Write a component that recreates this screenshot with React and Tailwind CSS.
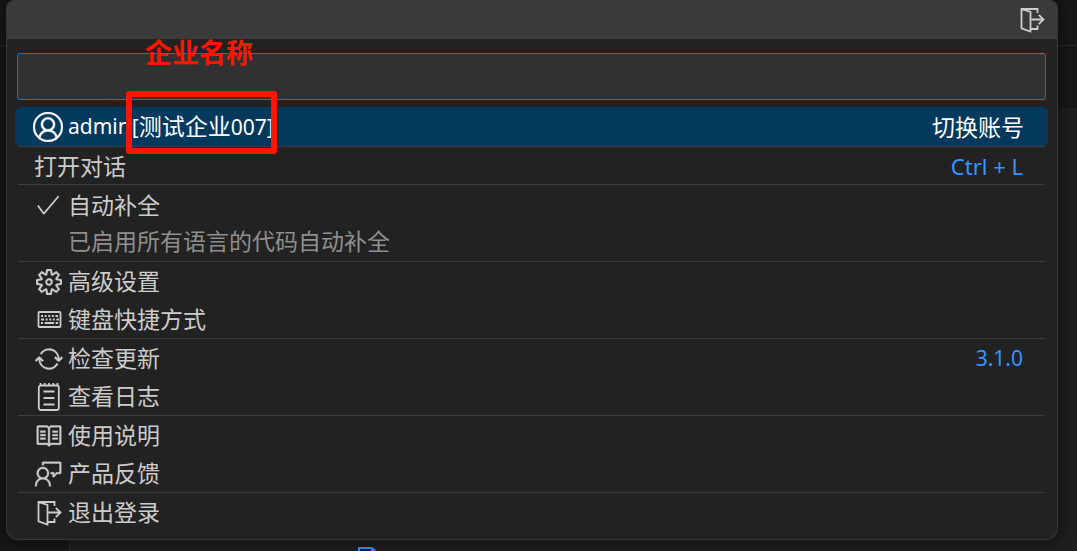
import React from "react";
import { VscAccount, VscCheck, VscSettingsGear, VscSync, VscBook, VscFeedback } from "react-icons/vsc";

function ExitIcon({ className }) {
  return (
    <svg viewBox="0 0 26 26" fill="none" stroke="currentColor" strokeWidth="1.8" className={className} aria-hidden="true">
      <path d="M18.500 6V2H2.500v19.300l9 3.200V5L2.800 2.200M12 22h6.500v-3.500M12.500 12.500h12M19.800 7.800l4.700 4.700-4.700 4.700" />
    </svg>
  );
}

function KeyboardIcon({ className }) {
  return (
    <svg viewBox="0 0 26 26" fill="none" stroke="currentColor" strokeWidth="1.800" className={className} aria-hidden="true">
      <rect x="2.500" y="5" width="22" height="15" rx="1" />
      <path d="M5 9h2m1.600 0h2m1.600 0h2m1.600 0h2m1.600 0h2.600M5 12.500h3m1.600 0h2m1.600 0h2m1.600 0h2m1.600 0h2.600M5 16h2m1.600 0h9.400m1.600 0h2.400" />
    </svg>
  );
}

function LogIcon({ className }) {
  return (
    <svg viewBox="0 0 26 30" fill="none" stroke="currentColor" strokeWidth="1.800" className={className} aria-hidden="true">
      <rect x="2.800" y="3.500" width="20" height="24.500" rx="2" />
      <path d="M4.500 1v3M8.700 1v3M13 1v3M17.300 1v3M21.500 1v3M7.500 9.500h11M7.500 16h11M7.500 22.500h11" />
    </svg>
  );
}

const ICON = "size-[26px]";
const WIDE_ICON = "size-[28px]";

const groups = [
  [{ icon: <VscSettingsGear className={ICON} strokeWidth="0.2" />, label: "高级设置" }, { icon: <KeyboardIcon className={ICON} />, label: "键盘快捷方式" }],
  [{ icon: <VscSync className={WIDE_ICON} strokeWidth="0.2" />, label: "检查更新", extra: "3.1.0" }, { icon: <LogIcon className="h-[30px] w-[26px]" />, label: "查看日志" }],
  [{ icon: <VscBook className={WIDE_ICON} strokeWidth="0.2" />, label: "使用说明" }, { icon: <VscFeedback className={WIDE_ICON} strokeWidth="0.2" />, label: "产品反馈" }],
  [{ icon: <ExitIcon className={ICON} />, label: "退出登录" }],
];

function Item({ icon, label, extra }) {
  return (
    <button type="button" className="flex h-[38px] w-full items-center px-4 text-left">
      {icon && (
        <span className="flex w-[34px] shrink-0 items-center pt-px">
          <span className="flex w-[29px] justify-center">{icon}</span>
        </span>
      )}
      <span>{label}</span>
      {extra && <span className="ml-auto pr-1.5 text-[21px] text-[#3794ff]">{extra}</span>}
    </button>
  );
}

function Workbench() {
  return (
    <div className="absolute inset-0 flex flex-col bg-[#181818]" aria-hidden="true">
      <div className="h-[46px] shrink-0 border-b border-[#2b2b2b]" />
      <div className="h-[62px] shrink-0" />
      <div className="flex grow">
        <div className="w-[70px] shrink-0 border-r border-[#2b2b2b]" />
        <div className="grow bg-[#1f1f1f]" />
      </div>
      <svg viewBox="0 0 20 24" className="absolute top-[547px] left-[358px] h-6 w-5" fill="none" stroke="#3794ff" strokeWidth="2">
        <path d="M1 24V1h13l5 5v18M14 1v5h5" />
      </svg>
    </div>
  );
}

export default function App() {
  return (
    <div className="relative min-h-screen overflow-hidden font-['Noto_Sans','Noto_Sans_CJK_SC',sans-serif] text-[23px] leading-8 text-[#cccccc]">
      <Workbench />
      <main className="relative mr-[19px] ml-1.5 rounded-xl rounded-t-lg border border-t-0 border-[#363636] bg-[#222222] pb-2 shadow-[0_0_16px_4px_rgba(0,0,0,0.4)]">
        <header className="flex h-[39px] items-center justify-end rounded-t-lg bg-[#3a3a3a] pr-3">
          <button type="button" aria-label="退出登录">
            <ExitIcon className={ICON} />
          </button>
        </header>
        <div className="pt-3.5 pr-[11px] pb-[7px] pl-2.5">
          <input aria-label="搜索" className="block h-[47px] w-full rounded-[3px] border border-[#0078d4] bg-[#313131] px-3 outline-none" />
        </div>
        <ul className="pr-[9px] pl-2">
          <li>
            <button type="button" className="flex h-[39px] w-full items-center rounded-md bg-[#04395e] px-[18px] text-left text-white">
              <span className="flex w-[35px] shrink-0 items-center">
                <VscAccount className="size-[30px]" strokeWidth="0.2" />
              </span>
              <span className="flex gap-px text-[21px]">
                <span>admin</span>
                <span>[<span className="text-[23px]">测试企业</span>007]</span>
              </span>
              <span className="ml-auto pr-1.5">切换账号</span>
            </button>
          </li>
          <li className="mx-[3px] border-t border-[#3c3c3c]">
            <button type="button" className="flex h-[37px] w-full items-center justify-between px-4 text-left">
              <span>打开对话</span>
              <kbd className="pr-1.5 font-['Noto_Sans',sans-serif] text-[22px] text-[#3794ff]">Ctrl + L</kbd>
            </button>
          </li>
          <li className="mx-[3px] border-t border-[#3c3c3c]">
            <button type="button" className="grid w-full grid-cols-[34px_1fr] items-center px-4 pt-0.5 pb-0.5 text-left">
              <VscCheck className="size-[28px]" />
              <span className="leading-9">自动补全</span>
              <span className="col-start-2 leading-9 text-[#8f8f8f]">已启用所有语言的代码自动补全</span>
            </button>
          </li>
          {groups.map((items, index) => (
            <li key={index} className="mx-[3px] border-t border-[#3c3c3c]">
              {items.map((item) => (
                <Item key={item.label} {...item} />
              ))}
            </li>
          ))}
        </ul>
      </main>
      <div className="pointer-events-none absolute top-[37px] left-[145px] text-[27px] font-bold text-[#ff1400]">企业名称</div>
      <div className="pointer-events-none absolute top-[91px] left-[126px] h-[63px] w-[151px] rounded-[3px] border-6 border-[#ff1400]" />
    </div>
  );
}
